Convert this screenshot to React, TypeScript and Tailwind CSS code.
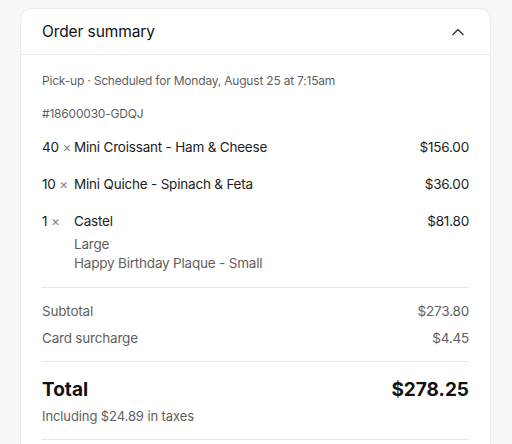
const items = [
  { qty: 40, name: 'Mini Croissant - Ham & Cheese', price: '$156.00', options: [] as string[] },
  { qty: 10, name: 'Mini Quiche - Spinach & Feta', price: '$36.00', options: [] as string[] },
  { qty: 1, name: 'Castel', price: '$81.80', options: ['Large', 'Happy Birthday Plaque - Small'] },
];

export default function App() {
  return (
    <div
      className="min-h-[444px] bg-[#f7f7f7] px-5 pt-[8px]"
      style={{ fontFamily: 'Inter, "Noto Sans", sans-serif' }}
    >
      <div className="w-[471px] rounded-t-[12px] border border-b-0 border-[#ececec] bg-white">
        {/* header */}
        <div className="flex h-[46px] items-center justify-between border-b border-[#ececec] px-[21px]">
          <h2 className="text-[15.5px] leading-6 tracking-[-0.1px] text-[#111]">Order summary</h2>
          <svg width="12" height="8" viewBox="0 0 12 8" className="mr-[5px]" fill="none">
            <path d="M1 6.5 6 1.5l5 5" stroke="#444" strokeWidth="1.6" strokeLinecap="round" strokeLinejoin="round" />
          </svg>
        </div>

        <div className="px-[21px] pt-[17px] pb-[15px]">
          <p className="text-[12px] leading-[18px] tracking-[-0.2px] text-[#5f5f5f]">
            Pick-up · Scheduled for Monday, August 25 at 7:15am
          </p>
          <p className="mt-[15px] text-[12px] leading-[18px] tracking-[-0.2px] text-[#5f5f5f]">#18600030-GDQJ</p>

          <div className="mt-[14px] flex flex-col gap-[17px]">
            {items.map((item) => (
              <div
                key={item.name}
                className="flex justify-between text-[13.5px] leading-5 tracking-[-0.2px] text-[#222]"
              >
                <div className="flex">
                  <span className="w-8 shrink-0">
                    {item.qty} <span className="text-[#888]">×</span>
                  </span>
                  <div>
                    <div>{item.name}</div>
                    {item.options.length > 0 && (
                      <div className="mt-[4px] text-[#5f5f5f] leading-[19px]">
                        {item.options.map((o) => (
                          <div key={o}>{o}</div>
                        ))}
                      </div>
                    )}
                  </div>
                </div>
                <span>{item.price}</span>
              </div>
            ))}
          </div>

          <div className="mt-[14px] border-t border-[#e5e5e5] pt-[13px] text-[13.5px] leading-5 tracking-[-0.2px] text-[#5f5f5f]">
            <div className="flex justify-between">
              <span>Subtotal</span>
              <span>$273.80</span>
            </div>
            <div className="mt-[7px] flex justify-between">
              <span>Card surcharge</span>
              <span>$4.45</span>
            </div>
          </div>

          <div className="mt-[13px] border-t border-[#e5e5e5] pt-[14px]">
            <div className="flex justify-between text-[19px] font-bold leading-7 text-[#111]">
              <span>Total</span>
              <span>$278.25</span>
            </div>
            <p className="mt-[3px] text-[13px] leading-[18px] tracking-[-0.1px] text-[#5f5f5f]">
              Including $24.89 in taxes
            </p>
          </div>

          <div className="mt-[14px] border-t border-[#e5e5e5]" />
        </div>
      </div>
    </div>
  );
}
